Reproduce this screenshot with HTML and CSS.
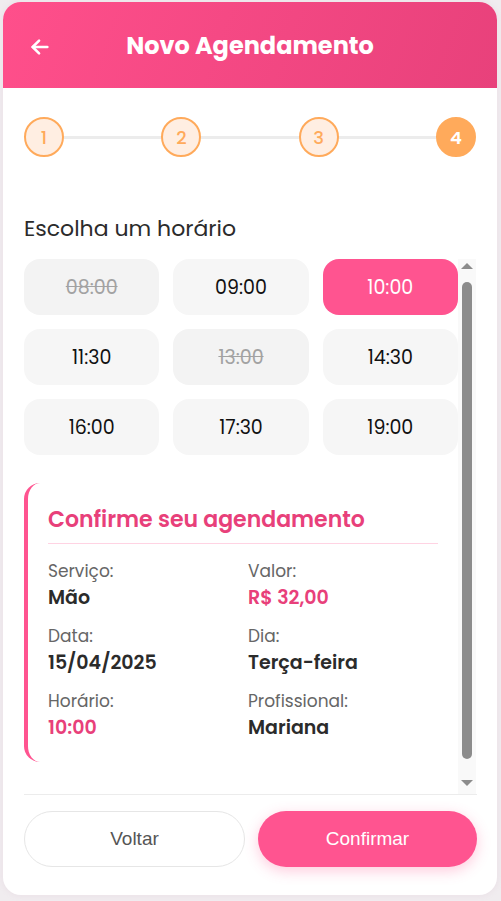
FILE: index.html
```html
<!DOCTYPE html>
<html lang="pt-br">
<head>
  <meta charset="UTF-8" />
  <title>Novo Agendamento</title>
  <link rel="stylesheet" href="styles.css">
</head>
<body>
  <div class="app">
    <header class="topo">
      <button class="voltar-icone" aria-label="Voltar">
        <svg width="22" height="22" viewBox="0 0 24 24" fill="none" stroke="#fff" stroke-width="2.8" stroke-linecap="round" stroke-linejoin="round">
          <path d="M20 12H4" />
          <path d="M11 5l-7 7 7 7" />
        </svg>
      </button>
      <h1>Novo Agendamento</h1>
    </header>

    <main class="conteudo">
      <div class="passos">
        <span class="passo">1</span>
        <span class="passo">2</span>
        <span class="passo">3</span>
        <span class="passo ativo">4</span>
      </div>

      <h2 class="subtitulo">Escolha um horário</h2>

      <div class="area-rolagem">
        <div class="rolagem">
          <div class="horarios">
            <button class="horario indisponivel">08:00</button>
            <button class="horario">09:00</button>
            <button class="horario selecionado">10:00</button>
            <button class="horario">11:30</button>
            <button class="horario indisponivel">13:00</button>
            <button class="horario">14:30</button>
            <button class="horario">16:00</button>
            <button class="horario">17:30</button>
            <button class="horario">19:00</button>
          </div>

          <div class="resumo">
            <h3>Confirme seu agendamento</h3>
            <div class="resumo-grid">
              <div>
                <div class="rotulo">Serviço:</div>
                <div class="valor">Mão</div>
              </div>
              <div>
                <div class="rotulo">Valor:</div>
                <div class="valor destaque">R$ 32,00</div>
              </div>
              <div>
                <div class="rotulo">Data:</div>
                <div class="valor">15/04/2025</div>
              </div>
              <div>
                <div class="rotulo">Dia:</div>
                <div class="valor">Terça-feira</div>
              </div>
              <div>
                <div class="rotulo">Horário:</div>
                <div class="valor destaque">10:00</div>
              </div>
              <div>
                <div class="rotulo">Profissional:</div>
                <div class="valor">Mariana</div>
              </div>
            </div>
          </div>
        </div>

        <!-- barra de rolagem desenhada -->
        <div class="barra">
          <span class="seta cima"></span>
          <span class="polegar"></span>
          <span class="seta baixo"></span>
        </div>
      </div>
    </main>

    <footer class="rodape">
      <button class="btn btn-secundario">Voltar</button>
      <button class="btn btn-primario">Confirmar</button>
    </footer>
  </div>
</body>
</html>
```

FILE: styles.css
```css
* {
  box-sizing: border-box;
}
body {
  margin: 0;
  padding: 2px 4px 6px 3px;
  background: #f0ecef;
  font-family: Poppins, "Open Sans", sans-serif;
}
.app {
  height: 893px;
  background: #fff;
  border-radius: 18px;
  overflow: hidden;
  display: flex;
  flex-direction: column;
  box-shadow: 0 0 6px rgba(200, 150, 180, 0.15);
}
.topo {
  height: 86px;
  flex-shrink: 0;
  background: linear-gradient(110deg, #ff4f8b 0%, #e8417b 100%);
  display: flex;
  align-items: center;
  justify-content: center;
  position: relative;
}
.voltar-icone {
  position: absolute;
  left: 24px;
  top: 32px;
  background: none;
  border: none;
  padding: 2px;
  cursor: pointer;
  display: flex;
}
.topo h1 {
  margin: 0;
  color: #fff;
  font-size: 24px;
  font-weight: 700;
}
.conteudo {
  flex: 1;
  padding: 29px 21px 0 21px;
  display: flex;
  flex-direction: column;
  min-height: 0;
}
.passos {
  display: flex;
  justify-content: space-between;
  position: relative;
}
.passos::before {
  content: "";
  position: absolute;
  left: 20px;
  right: 20px;
  top: 19px;
  height: 3px;
  background: #ececec;
}
.passo {
  position: relative;
  width: 40px;
  height: 40px;
  border-radius: 50%;
  border: 2px solid #ffaa5b;
  background: #ffeee2;
  color: #ffaa5b;
  font-size: 18px;
  font-weight: 500;
  display: flex;
  align-items: center;
  justify-content: center;
}
.passo.ativo {
  background: #ffaa5b;
  color: #fff;
  font-weight: 600;
}
.subtitulo {
  margin: 56px 0 14px;
  font-size: 22px;
  font-weight: 400;
  color: #2b2b2b;
  line-height: 32px;
}
.area-rolagem {
  height: 535px;
  display: flex;
}
.rolagem {
  flex: 1;
  overflow-y: auto;
  padding-bottom: 60px;
}
.horarios {
  display: grid;
  grid-template-columns: repeat(3, 1fr);
  gap: 14px;
}
.horario {
  height: 56px;
  border: none;
  border-radius: 16px;
  background: #f6f6f6;
  color: #111;
  font-family: Poppins, "Open Sans", sans-serif;
  font-size: 19px;
  cursor: pointer;
}
.horario.indisponivel {
  background: #f3f3f3;
  color: #a2a2a2;
  text-decoration: line-through;
}
.horario.selecionado {
  background: #ff5490;
  color: #fff;
}
.resumo {
  margin-top: 28px;
  border-left: 4px solid #ff5490;
  border-radius: 16px;
  padding: 22px 20px 21px 20px;
}
.resumo h3 {
  margin: 0;
  padding-bottom: 8px;
  border-bottom: 1px solid #ffd3e3;
  font-size: 22px;
  font-weight: 600;
  line-height: 30px;
  color: #e8407a;
}
.resumo-grid {
  display: grid;
  grid-template-columns: 1fr 1fr;
  column-gap: 10px;
  row-gap: 13px;
  margin-top: 15px;
}
.rotulo {
  font-size: 17px;
  line-height: 24px;
  color: #666;
  margin-bottom: 2px;
}
.valor {
  font-size: 19px;
  line-height: 26px;
  font-weight: 600;
  color: #2b2b2b;
}
.valor.destaque {
  color: #e8407a;
}
.barra {
  width: 18px;
  flex-shrink: 0;
  background: #f9f9f9;
  display: flex;
  flex-direction: column;
  align-items: center;
  padding: 4px 0 8px;
}
.seta {
  width: 0;
  height: 0;
  border-left: 6px solid transparent;
  border-right: 6px solid transparent;
}
.seta.cima {
  border-bottom: 6px solid #8c8c8c;
  margin-bottom: 13px;
}
.seta.baixo {
  border-top: 6px solid #8c8c8c;
  margin-top: 21px;
}
.polegar {
  flex: 1;
  width: 10px;
  border-radius: 5px;
  background: #8c8c8c;
}
.rodape {
  margin: 0 20px 0 21px;
  padding: 16px 0 28px;
  border-top: 1px solid #ececec;
  display: flex;
  gap: 13px;
}
.btn {
  flex: 1;
  height: 56px;
  border-radius: 28px;
  font-family: "Liberation Sans", Arial, sans-serif;
  font-size: 19px;
  cursor: pointer;
}
.btn-secundario {
  background: #fff;
  border: 1px solid #e6e6e6;
  color: #555;
}
.btn-primario {
  background: #ff5490;
  border: none;
  color: #fff;
  box-shadow: 0 4px 14px rgba(255, 84, 144, 0.3);
}
.btn-primario:hover {
  background: #f04683;
}
```
